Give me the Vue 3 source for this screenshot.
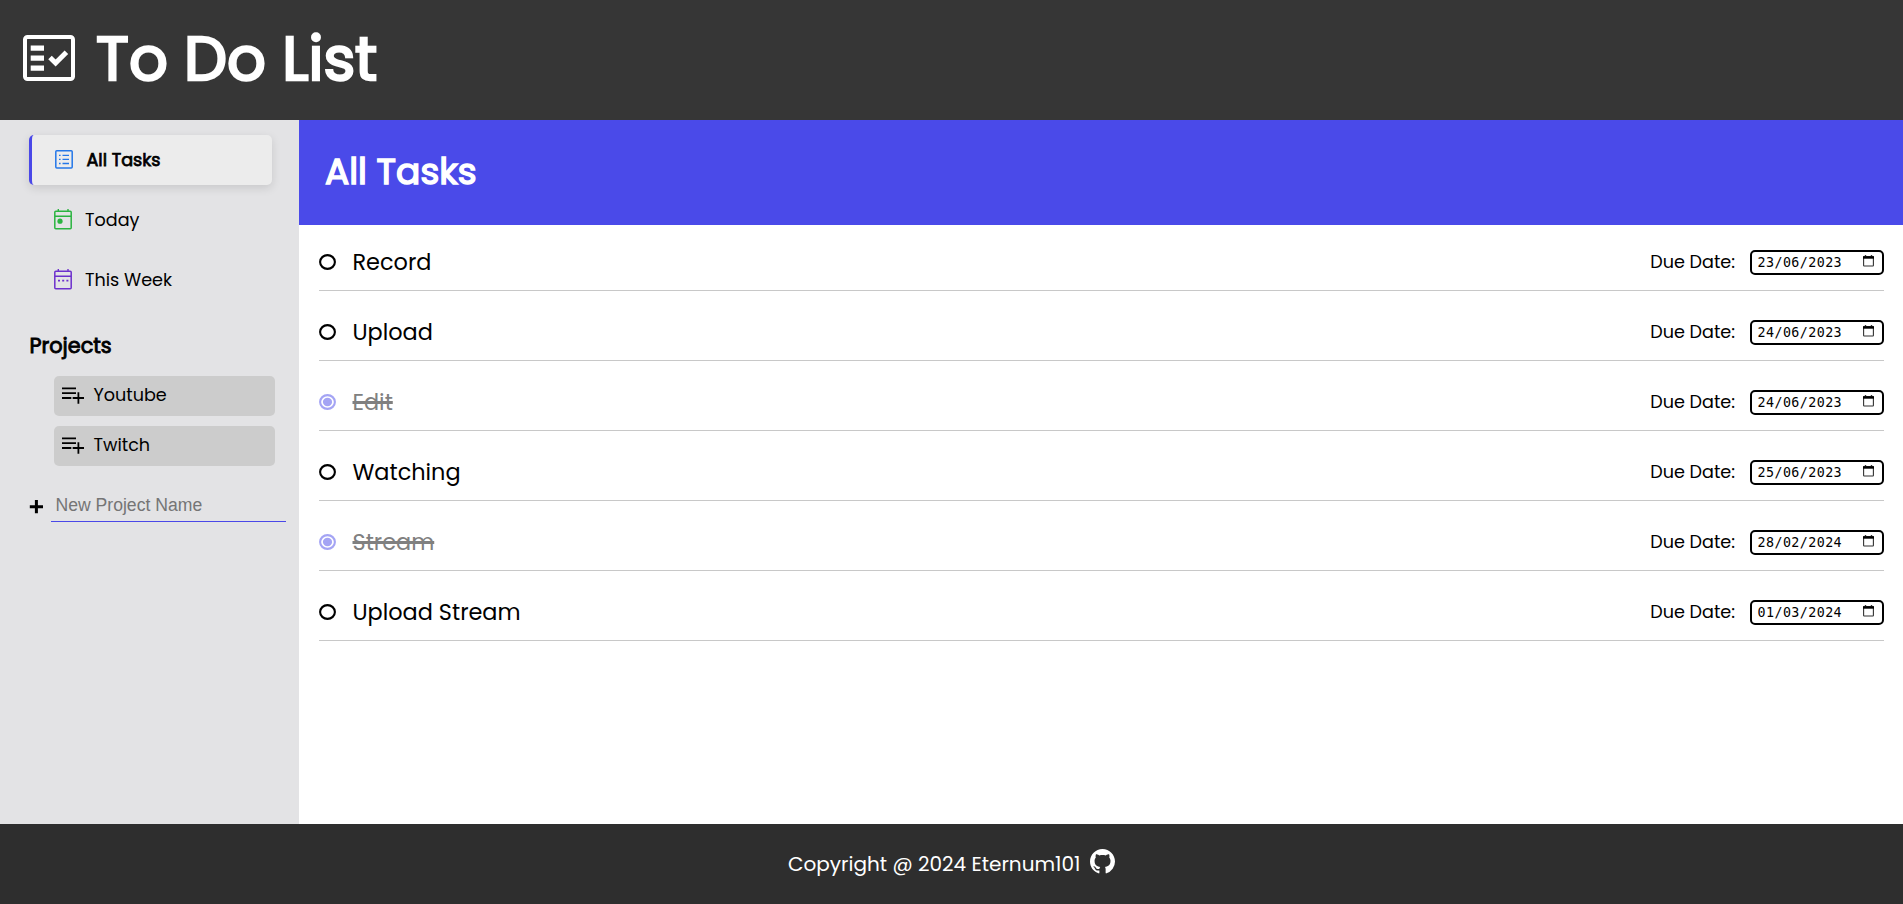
<script setup>
const tasks = [
  { name: 'Record', due: '23/06/2023', done: false },
  { name: 'Upload', due: '24/06/2023', done: false },
  { name: 'Edit', due: '24/06/2023', done: true },
  { name: 'Watching', due: '25/06/2023', done: false },
  { name: 'Stream', due: '28/02/2024', done: true },
  { name: 'Upload Stream', due: '01/03/2024', done: false },
]
const projects = ['Youtube', 'Twitch']
</script>

<template>
  <div class="page">
    <header class="top">
      <svg class="logo" viewBox="0 0 52 46" fill="none" stroke="#fff">
        <rect x="2" y="2" width="48" height="42" rx="2.5" stroke-width="4" />
        <path d="M7.7 13.2H21M7.7 23.2H21M7.7 33.2H21" stroke-width="5.2" />
        <path d="M27 22.5 L32.6 28 L43.4 17.2" stroke-width="5" />
      </svg>
      <h1 class="title">To Do List</h1>
    </header>

    <div class="body">
      <aside class="side">
        <nav class="menu">
          <div class="item active">
            <svg class="icon" viewBox="0 0 18 21" fill="none" stroke="#2477e8">
              <rect x=".8" y="1.8" width="16.4" height="17.2" rx="1" stroke-width="1.5" />
              <path d="M7.5 6.3h6.5M7.5 10.4h6.5M7.5 14.5h6.5M4 6.3h1.6M4 10.4h1.6M4 14.5h1.6" stroke-width="1.3" />
            </svg>
            <span class="label bold">All Tasks</span>
          </div>
          <div class="item">
            <svg class="icon" viewBox="0 0 18 21" fill="none" stroke="#2ab440">
              <path d="M4.3 0v2.5M14 0v2.5M1 7.2h16" stroke-width="1.4" />
              <rect x=".8" y="2.3" width="16.4" height="17.4" rx="1" stroke-width="1.5" />
              <circle cx="6" cy="12.2" r="2.6" fill="#2ab440" stroke="none" />
            </svg>
            <span class="label">Today</span>
          </div>
          <div class="item">
            <svg class="icon" viewBox="0 0 18 21" fill="none" stroke="#6d30cd">
              <path d="M4.3 0v2.5M14 0v2.5M1 7.2h16" stroke-width="1.4" />
              <rect x=".8" y="2.3" width="16.4" height="17.4" rx="1" stroke-width="1.5" />
              <path d="M4 11.7h2M8.2 11.7h2M12.4 11.7h2" stroke-width="1.8" />
            </svg>
            <span class="label">This Week</span>
          </div>
        </nav>

        <h2 class="heading">Projects</h2>
        <div class="projects">
          <div v-for="p in projects" :key="p" class="project">
            <svg class="plus-list" viewBox="0 0 22 17" fill="none" stroke="#000" stroke-width="1.8">
              <path d="M0 1.3h14M0 6.2h14M0 11h9.3M16.4 5.3v11.4M10.7 11h11.3" />
            </svg>
            <span class="label">{{ p }}</span>
          </div>
        </div>
        <div class="add">
          <svg class="add-icon" viewBox="0 0 14 14" stroke="#000" stroke-width="3">
            <path d="M.8 6.7h13.2M7.4 .1v13.2" />
          </svg>
          <input class="new-name" type="text" placeholder="New Project Name" />
        </div>
      </aside>

      <main class="main">
        <div class="banner"><h2 class="banner-title">All Tasks</h2></div>
        <ul class="list">
          <li v-for="t in tasks" :key="t.name" class="row" :class="{ done: t.done }">
            <svg class="radio" viewBox="0 0 17 16">
              <ellipse class="ring" cx="8.5" cy="8" rx="7.4" ry="6.9" />
              <ellipse v-if="t.done" class="dot" cx="8.5" cy="8" rx="4.6" ry="4.2" />
            </svg>
            <span class="name">{{ t.name }}</span>
            <span class="due">Due Date:</span>
            <span class="date">
              <span>{{ t.due }}</span>
              <svg class="cal" viewBox="0 0 11 12" fill="none" stroke="#333">
                <path d="M2.5 0v2M8.5 0v2" stroke-width="1.4" />
                <rect x=".6" y="1.6" width="9.8" height="9.4" rx=".5" stroke-width="1.1" />
                <path d="M0 2.5h11" stroke="#000" stroke-width="2.4" />
              </svg>
            </span>
          </li>
        </ul>
      </main>
    </div>

    <footer class="foot">
      <span class="copy">Copyright @ 2024 Eternum101</span>
      <svg class="github" viewBox="0 0 16 16" fill="#fff">
        <path d="M8 0C3.58 0 0 3.58 0 8c0 3.54 2.29 6.53 5.47 7.59.4.07.55-.17.55-.38 0-.19-.01-.82-.01-1.49-2.01.37-2.53-.49-2.69-.94-.09-.23-.48-.94-.82-1.13-.28-.15-.68-.52-.01-.53.63-.01 1.08.58 1.23.82.72 1.21 1.87.87 2.33.66.07-.52.28-.87.51-1.07-1.78-.2-3.64-.89-3.64-3.95 0-.87.31-1.59.82-2.15-.08-.2-.36-1.02.08-2.12 0 0 .67-.21 2.2.82.64-.18 1.32-.27 2-.27s1.36.09 2 .27c1.53-1.04 2.2-.82 2.2-.82.44 1.1.16 1.92.08 2.12.51.56.82 1.27.82 2.15 0 3.07-1.87 3.75-3.65 3.95.29.25.54.73.54 1.48 0 1.07-.01 1.93-.01 2.2 0 .21.15.46.55.38A8.01 8.01 0 0 0 16 8c0-4.42-3.58-8-8-8z" />
      </svg>
    </footer>
  </div>
</template>

<style>
body { margin: 0; }
</style>

<style scoped>
* { box-sizing: border-box; }
.page {
  width: 100%;
  height: 904px;
  display: flex;
  flex-direction: column;
  overflow: hidden;
  font-family: Poppins, Inter, "Open Sans", sans-serif;
  color: #000;
  white-space: nowrap;
}
h1, h2, ul { margin: 0; padding: 0; font-weight: 400; }
.top {
  height: 120px;
  flex: none;
  background: #363636;
  display: flex;
  align-items: center;
  padding: 0 0 4px 23px;
}
.logo { width: 52px; height: 46px; flex: none; }
.title { margin: 1px 0 0 21px; color: #fff; font-size: 60.8px; line-height: 80px; -webkit-text-stroke: 2.5px #fff; }
.body { flex: 1; display: flex; min-height: 0; }
.side { width: 299px; flex: none; background: #e3e3e5; padding: 15px 0 0 29px; }
.menu { display: flex; flex-direction: column; gap: 10px; }
.item { width: 243px; height: 50px; display: flex; align-items: center; padding-left: 25px; }
.item.active {
  padding-left: 23px;
  background: #ececec;
  border-left: 3px solid #4a48e8;
  border-radius: 5px;
  box-shadow: 0 3px 10px rgba(0, 0, 0, .12);
}
.icon { width: 18px; height: 21px; flex: none; margin: 0 13px 2px 0; }
.label { font-size: 17.6px; line-height: 26px; }
.bold { padding: 0 0 1px .5px; -webkit-text-stroke: .75px #000; }
.heading { margin: 24px 0 0 .5px; font-size: 20.8px; line-height: 34px; -webkit-text-stroke: .87px #000; }
.projects { margin: 13px 0 0 25px; display: flex; flex-direction: column; gap: 10px; }
.project { width: 221px; height: 40px; border-radius: 5px; background: #ccc; display: flex; align-items: center; padding: 0 0 2px 8px; }
.plus-list { width: 22px; height: 17px; margin: 1px 9.5px 0 0; }
.add { display: flex; align-items: center; margin-top: 22px; height: 34px; }
.add-icon { width: 14px; height: 14px; margin-top: 4px; flex: none; }
.new-name {
  margin-left: 8px;
  width: 235px;
  height: 34px;
  padding: 2px 4px 0 4.5px;
  border: 0;
  border-bottom: 1px solid #4a48e8;
  background: transparent;
  font: 17.6px "Liberation Sans", Arial, sans-serif;
  outline: none;
}
.new-name::placeholder { color: #757575; }
.main { flex: 1; background: #fff; }
.banner { height: 105px; background: #4a4ae9; display: flex; align-items: center; padding: 0 0 2px 26px; }
.banner-title { color: #fff; font-size: 36px; line-height: 54px; -webkit-text-stroke: 1.5px #fff; }
.list { list-style: none; margin: 0 19px 0 20px; }
.row { height: 70px; border-bottom: 1px solid #c8c8c8; display: flex; align-items: center; padding-top: 13px; }
.row:first-child { height: 66px; padding-top: 9px; }
.radio { width: 17px; height: 16px; flex: none; }
.ring { fill: none; stroke: #000; stroke-width: 2.1; }
.dot { fill: #a4a4f4; }
.done .ring { stroke: #a4a4f4; }
.name { margin-left: 16.5px; font-size: 22.4px; line-height: 34px; }
.due { margin-left: auto; font-size: 17.6px; line-height: 26px; }
.date {
  margin-left: 15px;
  width: 134px;
  height: 25px;
  flex: none;
  border: 2px solid #000;
  border-radius: 5px;
  display: flex;
  align-items: center;
  justify-content: space-between;
  padding: 0 8px 0 5.6px;
  font: 13.333px "DejaVu Sans Mono", monospace;
  letter-spacing: .42px;
}
.cal { width: 11px; height: 12px; margin-bottom: 2px; }
.done .name { color: #808080; text-decoration: line-through; text-decoration-thickness: 3px; }
.foot { height: 80px; flex: none; background: #2e2e2e; color: #fff; display: flex; align-items: center; justify-content: center; }
.copy { font-size: 20px; line-height: 30px; }
.github { width: 25px; height: 25px; margin: 0 0 5px 9.5px; }
</style>
